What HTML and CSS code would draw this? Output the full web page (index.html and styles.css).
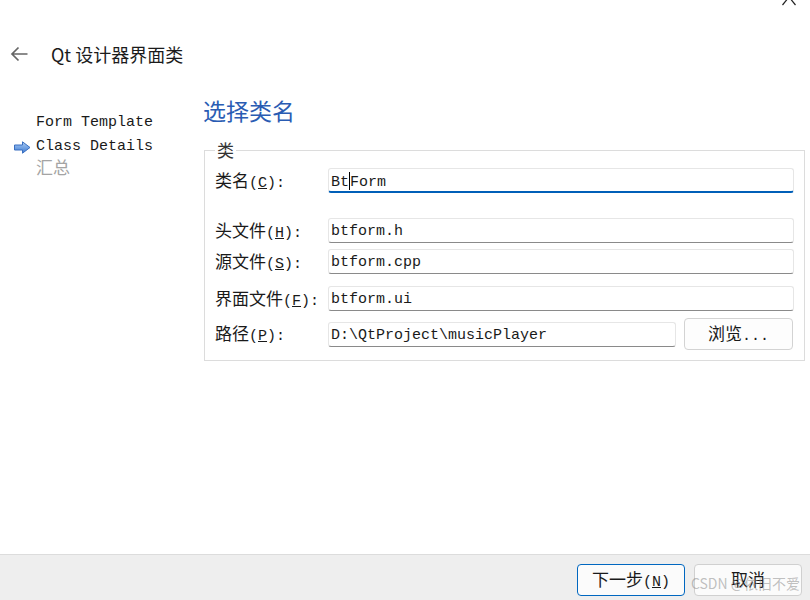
FILE: index.html
```html
<!DOCTYPE html>
<html lang="zh-CN">
<head>
  <meta charset="UTF-8">
  <title>Qt 设计器界面类</title>
  <link rel="stylesheet" href="styles.css">
</head>
<body>
  <svg class="close-tip" width="16" height="6" viewBox="0 0 16 6"><path d="M8 -3 L1.5 5 M8 -3 L14.5 5" stroke="#222" stroke-width="1.2" fill="none"/></svg>

  <header class="top">
    <svg class="back" width="18" height="16" viewBox="0 0 18 16"><path d="M17.5 8 H2 M8.5 1.5 L2 8 L8.5 14.5" stroke="#666" stroke-width="1.7" fill="none"/></svg>
    <span class="title">Qt 设计器界面类</span>
  </header>

  <div class="wizard">
    <ul class="steps">
      <li>Form Template</li>
      <li class="cur"><svg class="arrow" width="17" height="13" viewBox="0 0 17 13">
          <defs>
            <linearGradient id="ag" x1="0" y1="0" x2="0" y2="1">
              <stop offset="0" stop-color="#a9ccf5"/>
              <stop offset="1" stop-color="#3f7bd2"/>
            </linearGradient>
          </defs>
          <polygon points="0.5,4 8.5,4 8.5,0.8 16,6.5 8.5,12.2 8.5,9 0.5,9" fill="url(#ag)" stroke="#3a6fc0" stroke-width="1"/>
        </svg><span>Class Details</span></li>
      <li class="todo"><span class="zh">汇总</span></li>
    </ul>

    <section class="page">
      <h2>选择类名</h2>
      <fieldset class="group">
        <legend>类</legend>

        <div class="row r1">
          <label><span class="zh">类名</span>(<u>C</u>):</label>
          <div class="field focus">Bt<span class="caret"></span>Form</div>
        </div>
        <div class="row r2">
          <label><span class="zh">头文件</span>(<u>H</u>):</label>
          <div class="field">btform.h</div>
        </div>
        <div class="row r3">
          <label><span class="zh">源文件</span>(<u>S</u>):</label>
          <div class="field">btform.cpp</div>
        </div>
        <div class="row r4">
          <label><span class="zh">界面文件</span>(<u>F</u>):</label>
          <div class="field">btform.ui</div>
        </div>
        <div class="row r5">
          <label><span class="zh">路径</span>(<u>P</u>):</label>
          <div class="field path">D:\QtProject\musicPlayer</div>
          <button class="browse"><span class="zh">浏览</span>...</button>
        </div>
      </fieldset>
    </section>
  </div>

  <footer class="bar">
    <button class="primary"><span class="zh">下一步</span>(<u>N</u>)</button>
    <button><span class="zh">取消</span></button>
    <span class="mark">CSDN @依旧不爱</span>
  </footer>
</body>
</html>
```

FILE: styles.css
```css
html, body {
  margin: 0;
}
body {
  width: 810px;
  height: 600px;
  display: flex;
  flex-direction: column;
  position: relative;
  overflow: hidden;
  background: #fff;
  color: #1a1a1a;
  font-family: "Liberation Mono", "Noto Sans CJK SC", monospace;
  font-size: 15px;
}
.zh {
  font-family: "Noto Sans CJK SC", sans-serif;
  font-size: 17px;
  line-height: 1;
}
.close-tip {
  position: absolute;
  top: 0;
  right: 13px;
}

/* title row */
.top {
  height: 56px;
  padding: 40px 0 0 10px;
  display: flex;
  align-items: flex-start;
}
.back {
  margin-top: 6px;
}
.title {
  margin-left: 23px;
  font-family: "Noto Sans CJK SC", "Liberation Sans", sans-serif;
  font-size: 18px;
  line-height: 28px;
  color: #1b1b1b;
}

.wizard {
  flex: 1;
  display: flex;
}

/* left step list */
.steps {
  width: 203px;
  flex: none;
  box-sizing: border-box;
  margin: 0;
  padding: 15px 0 0 36px;
  list-style: none;
}
.steps li {
  height: 24px;
  line-height: 24px;
  display: flex;
  align-items: center;
  white-space: nowrap;
}
.steps .arrow {
  flex: none;
  margin-left: -22px;
  margin-right: 5px;
}
.steps .todo {
  color: #a4a4a4;
}
.steps .todo .zh {
  margin-top: -9px;
}

/* right page */
.page {
  flex: 1;
  padding-right: 5px;
}
.page h2 {
  margin: 0;
  font-family: "Noto Sans CJK SC", sans-serif;
  font-weight: 400;
  font-size: 23px;
  line-height: 28px;
  color: #2a5cb3;
}
.group {
  margin: 16px 0 0 1px;
  padding: 0 10px 10px;
  border: 1px solid #dcdcdc;
}
.group legend {
  padding: 0 2px;
  font-family: "Noto Sans CJK SC", sans-serif;
  font-size: 17px;
  line-height: 20px;
  color: #333;
}
.row {
  display: flex;
  align-items: center;
  height: 25px;
}
.r1 { margin-top: 8px; }
.r2 { margin-top: 25px; }
.r3 { margin-top: 6px; }
.r4 { margin-top: 12px; }
.r5 { margin-top: 7px; height: 32px; }
.row label {
  width: 113px;
  flex: none;
  padding-top: 3px;
  line-height: 20px;
  white-space: pre;
}
.field {
  flex: 1;
  height: 25px;
  box-sizing: border-box;
  padding: 3px 2px 0;
  border: 1px solid #e6e6e6;
  border-bottom-color: #8a8a8a;
  border-radius: 3px;
  background: #fff;
  line-height: 20px;
  white-space: pre;
}
.field.focus {
  border-bottom: 2px solid #005fb8;
}
.caret {
  display: inline-block;
  width: 0;
  height: 18px;
  border-left: 1px solid #000;
  vertical-align: -4px;
}
.field.path {
  flex: none;
  width: 348px;
}
.browse {
  margin-left: 8px;
  width: 109px;
  height: 32px;
  border: 1px solid #d3d3d3;
  border-radius: 4px;
  background: #fdfdfd;
  color: #1a1a1a;
  font-family: inherit;
  font-size: 15px;
  padding: 0;
}

/* bottom buttons */
.bar {
  height: 46px;
  box-sizing: border-box;
  display: flex;
  justify-content: flex-end;
  gap: 9px;
  padding: 9px 8px 0 0;
  border-top: 1px solid #dcdcdc;
  background: #eeeeee;
}
.bar button {
  width: 108px;
  height: 32px;
  padding: 0;
  border: 1px solid #d0d0d0;
  border-radius: 4px;
  background: #fbfbfb;
  color: #1a1a1a;
  font-family: inherit;
  font-size: 15px;
}
.bar .primary {
  border-color: #0067c0;
}
.mark {
  position: absolute;
  right: 10px;
  bottom: 7px;
  font-family: "Noto Sans CJK SC", sans-serif;
  font-size: 14px;
  color: rgba(140, 140, 140, 0.55);
}
```
